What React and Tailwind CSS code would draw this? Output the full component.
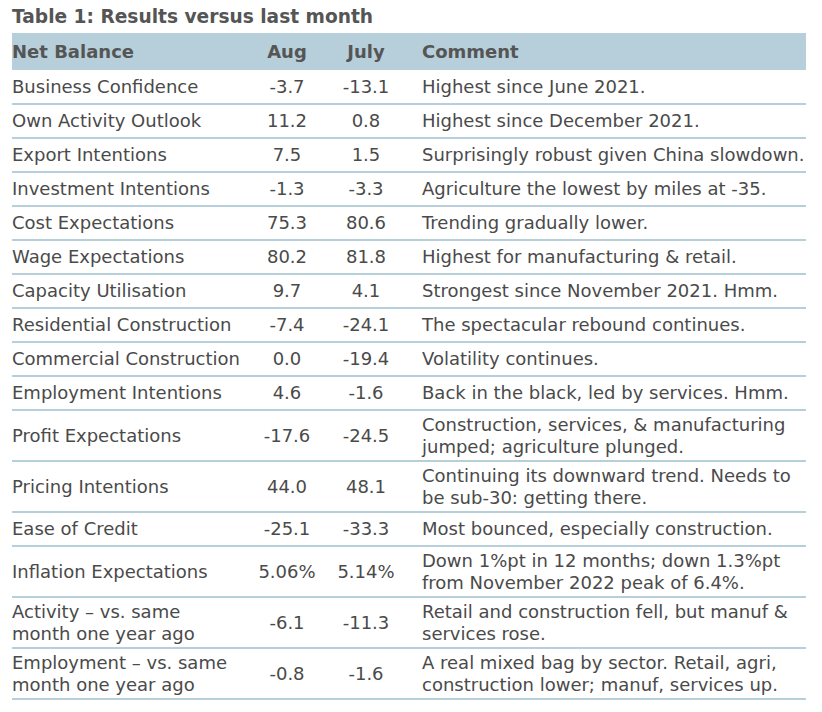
import React from "react";

const ROWS = [
  ["Business Confidence", "-3.7", "-13.1", "Highest since June 2021."],
  ["Own Activity Outlook", "11.2", "0.8", "Highest since December 2021."],
  ["Export Intentions", "7.5", "1.5", "Surprisingly robust given China slowdown."],
  ["Investment Intentions", "-1.3", "-3.3", "Agriculture the lowest by miles at -35."],
  ["Cost Expectations", "75.3", "80.6", "Trending gradually lower."],
  ["Wage Expectations", "80.2", "81.8", "Highest for manufacturing & retail."],
  ["Capacity Utilisation", "9.7", "4.1", "Strongest since November 2021. Hmm."],
  ["Residential Construction", "-7.4", "-24.1", "The spectacular rebound continues."],
  ["Commercial Construction", "0.0", "-19.4", "Volatility continues."],
  ["Employment Intentions", "4.6", "-1.6", "Back in the black, led by services. Hmm."],
  ["Profit Expectations", "-17.6", "-24.5", "Construction, services, & manufacturing\njumped; agriculture plunged."],
  ["Pricing Intentions", "44.0", "48.1", "Continuing its downward trend. Needs to\nbe sub-30: getting there."],
  ["Ease of Credit", "-25.1", "-33.3", "Most bounced, especially construction."],
  ["Inflation Expectations", "5.06%", "5.14%", "Down 1%pt in 12 months; down 1.3%pt\nfrom November 2022 peak of 6.4%."],
  ["Activity \u2013 vs. same\nmonth one year ago", "-6.1", "-11.3", "Retail and construction fell, but manuf &\nservices rose."],
  ["Employment \u2013 vs. same\nmonth one year ago", "-0.8", "-1.6", "A real mixed bag by sector. Retail, agri,\nconstruction lower; manuf, services up."],
];

export default function App() {
  return (
    <div className="w-[822px] h-[712px] bg-white pl-3 pt-[3px] text-[#4a4a4a] font-['DejaVu_Sans',Verdana,sans-serif]">
      <h1 className="text-[18.6px] leading-[27px] font-bold text-[#555]">Table 1: Results versus last month</h1>
      <table className="mt-[3px] w-[794px] table-fixed border-collapse text-[18px] leading-[22px]">
        <colgroup>
          <col className="w-[240px]" />
          <col className="w-[70px]" />
          <col className="w-[88px]" />
          <col />
        </colgroup>
        <thead>
          <tr className="bg-[#b6cfda] h-[37px] font-bold text-[#555]">
            <th className="text-left font-bold pl-0">Net Balance</th>
            <th className="text-center font-bold">Aug</th>
            <th className="text-center font-bold">July</th>
            <th className="text-left font-bold pl-3">Comment</th>
          </tr>
        </thead>
        <tbody>
          {ROWS.map(([name, aug, july, comment]) => (
            <tr key={name} className="border-b-2 border-[#b6cfda] h-[34px]">
              <td className="py-[2.5px] align-middle whitespace-pre-line">{name}</td>
              <td className="text-center align-middle">{aug}</td>
              <td className="text-center align-middle">{july}</td>
              <td className="pl-3 py-[2.5px] align-middle whitespace-pre-line">{comment}</td>
            </tr>
          ))}
        </tbody>
      </table>
    </div>
  );
}
